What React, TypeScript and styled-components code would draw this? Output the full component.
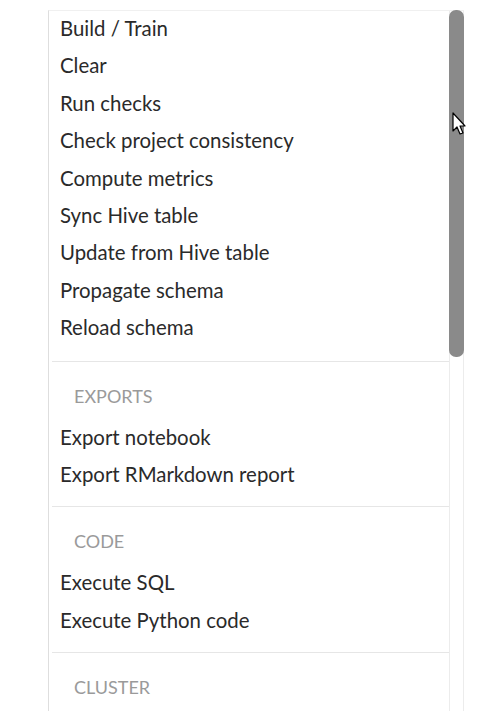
import React from "react";
import styled, { createGlobalStyle } from "styled-components";

const GlobalStyle = createGlobalStyle`
  html, body {
    margin: 0;
    padding: 0;
    background: #ffffff;
    overflow: hidden;
  }
  body {
    font-family: Lato, "Open Sans", "Liberation Sans", sans-serif;
  }
`;

const Page = styled.div`
  position: relative;
  width: 500px;
  height: 711px;
  padding: 10px 0 0 48px;
  box-sizing: border-box;
  overflow: hidden;
`;

const Panel = styled.div`
  display: flex;
  width: 416px;
  height: 720px;
  border-left: 1px solid #dedede;
  border-top: 1px solid #f0f0f0;
  box-sizing: border-box;
`;

const Content = styled.div`
  flex: 1;
  min-width: 0;
`;

const Section = styled.div`
  padding: 16px 0 13px 0;
  border-bottom: 1px solid #e6e6e6;
  margin-left: 3px;

  &:first-child {
    padding: 0 0 14px 0;
    margin-top: -1px;
  }
`;

const SectionTitle = styled.div`
  padding-left: 22px;
  font-size: 18px;
  line-height: 37.4px;
  color: #9a9a9a;
  text-transform: uppercase;
  margin-bottom: 3.6px;
`;

const Item = styled.div`
  padding-left: 8px;
  font-size: 20.4px;
  line-height: 37.4px;
  color: #2a2a2a;
  white-space: nowrap;
`;

const Track = styled.div`
  width: 15px;
  flex: none;
  border-left: 1px solid #ececec;
  border-right: 1px solid #ececec;
  box-sizing: border-box;
  position: relative;
`;

const Thumb = styled.div`
  position: absolute;
  top: -1px;
  left: -1px;
  right: -1px;
  height: 347px;
  background: #8a8a8a;
  border-radius: 7px;
`;

const Cursor = styled.svg`
  position: absolute;
  left: 452px;
  top: 112px;
`;

const sections: { title?: string; items: string[] }[] = [
  {
    items: [
      "Build / Train",
      "Clear",
      "Run checks",
      "Check project consistency",
      "Compute metrics",
      "Sync Hive table",
      "Update from Hive table",
      "Propagate schema",
      "Reload schema",
    ],
  },
  { title: "Exports", items: ["Export notebook", "Export RMarkdown report"] },
  { title: "Code", items: ["Execute SQL", "Execute Python code"] },
  { title: "Cluster", items: [] },
];

export default function App() {
  return (
    <>
      <GlobalStyle />
      <Page>
        <Panel>
          <Content>
            {sections.map((s, i) => (
              <Section key={i}>
                {s.title && <SectionTitle>{s.title}</SectionTitle>}
                {s.items.map((it) => (
                  <Item key={it}>{it}</Item>
                ))}
              </Section>
            ))}
          </Content>
          <Track>
            <Thumb />
          </Track>
        </Panel>
        <Cursor width="14" height="24" viewBox="0 0 14 24">
          <path d="M1 1 L1 19 L5 15 L8 22 L11 21 L8 14 L13 14 Z" fill="#ffffff" stroke="#000000" strokeWidth="1.2" strokeLinejoin="round" />
        </Cursor>
      </Page>
    </>
  );
}
